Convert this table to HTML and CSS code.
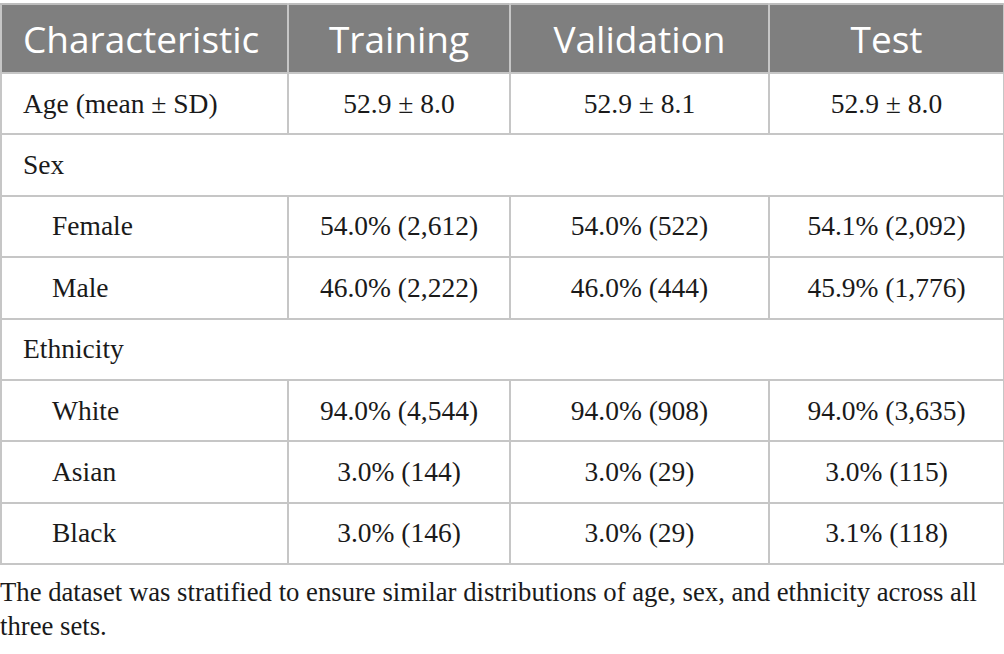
FILE: index.html
```html
<!DOCTYPE html>
<html>
<head>
<meta charset="utf-8">
<link rel="stylesheet" href="styles.css">
</head>
<body>
<table class="data">
  <colgroup>
    <col class="c1"><col class="c2"><col class="c3"><col class="c4">
  </colgroup>
  <thead>
    <tr><th class="first">Characteristic</th><th>Training</th><th>Validation</th><th>Test</th></tr>
  </thead>
  <tbody>
    <tr><td class="label">Age (mean ± SD)</td><td>52.9 ± 8.0</td><td>52.9 ± 8.1</td><td>52.9 ± 8.0</td></tr>
    <tr><td class="label group" colspan="4">Sex</td></tr>
    <tr><td class="label sub">Female</td><td>54.0% (2,612)</td><td>54.0% (522)</td><td>54.1% (2,092)</td></tr>
    <tr><td class="label sub">Male</td><td>46.0% (2,222)</td><td>46.0% (444)</td><td>45.9% (1,776)</td></tr>
    <tr><td class="label group" colspan="4">Ethnicity</td></tr>
    <tr><td class="label sub">White</td><td>94.0% (4,544)</td><td>94.0% (908)</td><td>94.0% (3,635)</td></tr>
    <tr><td class="label sub">Asian</td><td>3.0% (144)</td><td>3.0% (29)</td><td>3.0% (115)</td></tr>
    <tr><td class="label sub">Black</td><td>3.0% (146)</td><td>3.0% (29)</td><td>3.1% (118)</td></tr>
  </tbody>
</table>
<p class="note">The dataset was stratified to ensure similar distributions of age, sex, and ethnicity across all three sets.</p>
</body>
</html>
```
FILE: styles.css
```css
html, body {
  margin: 0;
  padding: 0;
  background: #ffffff;
}
body {
  padding-top: 3px;
  font-family: "Liberation Serif", "Times New Roman", serif;
  color: #1a1a1a;
}
.data {
  border-collapse: collapse;
  width: 1003px;
  table-layout: fixed;
}
.c1 { width: 287px; }
.c2 { width: 222px; }
.c3 { width: 259px; }
.c4 { width: 235px; }
.data th {
  background: #7f7f7f;
  color: #ffffff;
  font-family: "Open Sans", "Noto Sans", sans-serif;
  font-weight: 400;
  font-size: 37px;
  height: 67px;
  padding: 0;
  text-align: center;
  border: 2px solid #c6c6c6;
  border-top-color: #bdbdbd;
}
.data th.first {
  text-align: left;
  padding-left: 21px;
}
.data td {
  height: 59.4px;
  padding: 0;
  font-size: 27.5px;
  text-align: center;
  border: 2px solid #c6c6c6;
}
.data td.label {
  text-align: left;
  padding-left: 21px;
}
.data td.sub {
  padding-left: 50px;
}
.note {
  margin: 10px 0 0 0;
  font-size: 26.7px;
  line-height: 34px;
  color: #1a1a1a;
}
```
